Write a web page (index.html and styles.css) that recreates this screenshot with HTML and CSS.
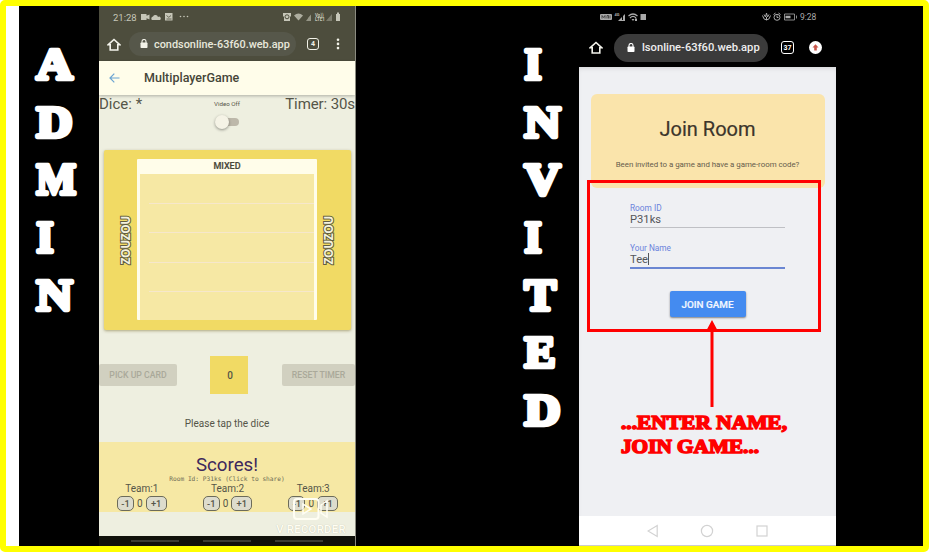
FILE: index.html
```html
<!DOCTYPE html>
<html lang="en">
<head>
<meta charset="utf-8">
<title>Multiplayer game: admin and invited</title>
<link rel="stylesheet" href="styles.css">
</head>
<body>
<main class="frame">
  <div class="stage">
    <svg class="side side-admin" width="80" height="540" viewBox="0 0 80 540">
      <text x="17.500" y="73" textLength="36" lengthAdjust="spacingAndGlyphs">A</text>
      <text x="17.500" y="130.700" textLength="36" lengthAdjust="spacingAndGlyphs">D</text>
      <text x="17.500" y="188.300" textLength="39.500" lengthAdjust="spacingAndGlyphs">M</text>
      <text x="17.500" y="246" textLength="17" lengthAdjust="spacingAndGlyphs">I</text>
      <text x="17.500" y="303.700" textLength="36" lengthAdjust="spacingAndGlyphs">N</text>
    </svg>

    <section class="phone admin">
      <div class="status">
        <span class="clock">21:28</span>
        <svg class="st-left" width="50" height="10" viewBox="0 0 50 10" fill="#c6c6b8"><path d="M0 2h5.500v1.700L8.500 2.500v5L5.500 6.300V8H0zM11 8a2 2 0 0 1 1-3.500 2.700 2.700 0 0 1 5 .5 1.600 1.600 0 0 1 2 3zM24 1h7.500v7.500H24z"/><path d="M25.500 3.500l2.300 1.800L30 3.500M25.500 7h5" fill="none" stroke="#4d4d3d" stroke-width=".8"/><circle cx="39.500" cy="4.500" r=".8"/><circle cx="43" cy="4.500" r=".8"/><circle cx="46.500" cy="4.500" r=".8"/></svg>
        <svg class="st-right" width="58" height="10" viewBox="0 0 58 10" fill="#c6c6b8"><path d="M0 1h8v3l-1 1v4H1V5L0 4z"/><circle cx="4" cy="4.800" r="2" fill="none" stroke="#4d4d3d"/><path d="M11 3.500q4.500-4 9 0L15.500 8.500z" opacity=".8"/><path d="M17 7.500h3M23 9h3V5zM25 9h3V2.500l-3 3.500z" opacity=".6"/><g class="tiny"><text x="32" y="4.500">Vo))</text><text x="32" y="9">LTE1</text></g><path d="M43 9h6V2z" opacity=".4"/><path d="M53 2h1V.5h2V2h1v7h-4z"/></svg>
      </div>
      <div class="toolbar">
        <svg class="home" width="14" height="13" viewBox="0 0 14 13"><path d="M1.300 6.700 7 1.500l5.700 5.200H10.800V12H3.200V6.700z"/></svg>
        <div class="address"><svg width="8" height="10" viewBox="0 0 8 10"><path d="M2 4V2.500a2 2 0 0 1 4 0V4" fill="none" stroke="#f2f2e8" stroke-width="1.100"/><rect x=".5" y="3.500" width="7" height="5.500" rx=".8" fill="#f2f2e8"/></svg><span>condsonline-63f60.web.app</span></div>
        <div class="tabs">4</div>
        <svg class="dots" width="4" height="12" viewBox="0 0 4 12" fill="#f2f2e8"><circle cx="2" cy="1.700" r="1.300"/><circle cx="2" cy="5.900" r="1.300"/><circle cx="2" cy="10.100" r="1.300"/></svg>
      </div>
      <header class="app-head">
        <svg width="11" height="10" viewBox="0 0 11 10" fill="none" stroke="#6ba4d2" stroke-width="1.200"><path d="M10.500 5H1M5.300.7 1 5l4.300 4.300"/></svg>
        <h1>MultiplayerGame</h1>
      </header>
      <div class="info">
        <span class="dice">Dice: *</span>
        <div class="video"><span>Video Off</span><i class="switch"></i></div>
        <span class="timer">Timer: 30s</span>
      </div>
      <div class="board">
        <div class="brand"><span>ZOUZOU</span></div>
        <div class="card"><h2>MIXED</h2><div class="slots"><i></i><i></i><i></i><i></i><i></i></div></div>
        <div class="brand"><span>ZOUZOU</span></div>
      </div>
      <div class="controls">
        <button class="pick">PICK UP CARD</button><div class="die">0</div><button class="reset">RESET TIMER</button>
      </div>
      <p class="hint">Please tap the dice</p>
      <div class="scores">
        <h2>Scores!</h2>
        <p class="room">Room Id: P31ks (Click to share)</p>
        <div class="teams">
          <div class="team"><b>Team:1</b><div><i>-1</i><span>0</span><i>+1</i></div></div>
          <div class="team"><b>Team:2</b><div><i>-1</i><span>0</span><i>+1</i></div></div>
          <div class="team"><b>Team:3</b><div><i>-1</i><span>0</span><i>+1</i></div></div>
        </div>
      </div>
      <div class="recorder">
        <svg width="36" height="22" viewBox="0 0 36 22" fill="none" stroke="#fffef3" stroke-width="2"><rect x="1" y="1" width="24.500" height="20" rx="3"/><path d="M10 6v10l8-5zM28 7l6-4v16l-6-4z" stroke-width="1.500"/></svg>
        <span>V RECORDER</span>
      </div>
      <div class="navline"><i></i><i></i><i></i></div>
    </section>

    <svg class="side side-invited" width="223" height="540" viewBox="0 0 223 540">
      <text x="168.500" y="73" textLength="17" lengthAdjust="spacingAndGlyphs">I</text>
      <text x="168.500" y="130.700" textLength="36" lengthAdjust="spacingAndGlyphs">N</text>
      <text x="168.500" y="188.300" textLength="36" lengthAdjust="spacingAndGlyphs">V</text>
      <text x="168.500" y="246" textLength="17" lengthAdjust="spacingAndGlyphs">I</text>
      <text x="168.500" y="303.700" textLength="31.500" lengthAdjust="spacingAndGlyphs">T</text>
      <text x="168.500" y="361.200" textLength="31" lengthAdjust="spacingAndGlyphs">E</text>
      <text x="168.500" y="418.900" textLength="36" lengthAdjust="spacingAndGlyphs">D</text>
    </svg>

    <section class="phone invited">
      <div class="status">
        <svg class="st-left" width="48" height="10" viewBox="0 0 48 10" fill="#aaa"><rect x="0" y="2" width="12" height="6" rx="1"/><path d="M2 6.500v-3l1.500 2 1.500-2v3M7 6.500v-3h1.500v3M10 3.500v3" stroke="#333" stroke-width=".8" fill="none"/><text x="14.500" y="4" class="mini">4G</text><path d="M18 9h7V2l-2 2v4h-1V5z"/><path d="M28.500 4q4.500-4 9 0M30 6q3-3 6 0" fill="none" stroke="#aaa" stroke-width="1.200"/><path d="M31.500 7h3L33 9zM35 6.500h2V9h-2zM40.500 2h5.500v6h-5.500z"/></svg>
        <svg class="st-right" width="37" height="10" viewBox="0 0 37 10" fill="none" stroke="#aaa"><path d="M.5 3.500q1 4.500 4 4.500t4-4.500M2 2.500 3.500 5 4.500 1 5.500 5 7 2.500M4.500 5v3"/><circle cx="15" cy="5.300" r="3"/><path d="M11.500 2.500l2-1.500M18.500 2.500l-2-1.500M15 3.500v2h1.500"/><path d="M22.500 2h10v6h-10zM34.500 3.500v3" stroke-width=".8"/><path d="M23.500 5h5" stroke-width="2.500"/></svg>
        <span class="clock">9:28</span>
      </div>
      <div class="toolbar">
        <svg class="home" width="14" height="13" viewBox="0 0 14 13"><path d="M1.300 6.700 7 1.500l5.700 5.200H10.800V12H3.200V6.700z"/></svg>
        <div class="address"><svg width="8" height="10" viewBox="0 0 8 10"><path d="M2 4V2.500a2 2 0 0 1 4 0V4" fill="none" stroke="#fff" stroke-width="1.100"/><rect x=".5" y="3.500" width="7" height="5.500" rx=".8" fill="#fff"/></svg><span>lsonline-63f60.web.app</span></div>
        <div class="tabs">37</div>
        <svg class="update" width="13" height="13" viewBox="0 0 13 13"><circle cx="6.500" cy="6.500" r="6.500" fill="#fff"/><path d="M6.500 3.200 3.500 6.500h1.700v3h2.600v-3h1.700z" fill="#c8564a"/></svg>
      </div>
      <div class="page">
        <div class="join-card"><h1>Join Room</h1><p>Been invited to a game and have a game-room code?</p></div>
        <div class="field"><label>Room ID</label><span>P31ks</span></div>
        <div class="field active"><label>Your Name</label><span>Tee<i class="caret"></i></span></div>
        <button class="join">JOIN GAME</button>
      </div>
      <div class="keys">
        <svg width="11" height="14" viewBox="0 0 11 14"><path d="M10.200 1.500v11L1 7z"/></svg>
        <svg width="14" height="14" viewBox="0 0 14 14"><circle cx="7" cy="7" r="5.600"/></svg>
        <svg width="12" height="14" viewBox="0 0 12 14"><rect x="1" y="2" width="10" height="10"/></svg>
      </div>
      <div class="highlight"></div>
      <svg class="arrow" width="10" height="87" viewBox="0 0 10 87"><path d="M3.500 8h3v79h-3zM5 0l4.800 9H.2z" fill="red"/></svg>
      <svg class="callout" width="180" height="52" viewBox="0 0 180 52">
        <text x="1" y="18.500" textLength="166" lengthAdjust="spacingAndGlyphs">...ENTER NAME,</text>
        <text x="1" y="42.500" textLength="138" lengthAdjust="spacingAndGlyphs">JOIN GAME...</text>
      </svg>
    </section>
  </div>
</main>
</body>
</html>
```
FILE: styles.css
```css
* { box-sizing: border-box; margin: 0; padding: 0; }
body { background: #fff; font-family: Roboto, sans-serif; overflow: hidden; }
i { font-style: normal; }
svg { display: block; flex: none; }
h1, h2, b { font-weight: 400; }
span { white-space: nowrap; }
.frame { width: 929px; height: 552px; border: 6px solid #ff0; border-radius: 5px; padding-left: 13px; background: #fff; overflow: hidden; }
.stage { height: 540px; background: #000; display: flex; }

.side { fill: #fff; stroke: #fff; stroke-width: 4.400px; stroke-linejoin: round; font: bold 45px "Liberation Serif", serif; }

.phone { position: relative; flex: none; height: 540px; display: flex; flex-direction: column; overflow: hidden; }
.admin { width: 257px; background: #eeefe0; color: #555548; border-right: 1px solid #8b8b80; }
.status { display: flex; align-items: center; flex: none; }
.toolbar { display: flex; align-items: center; flex: none; }
.address { display: flex; align-items: center; flex: none; font-weight: 500; }
.home { fill: none; stroke: #f4f4ec; stroke-width: 1.600; }
.tabs { display: grid; place-items: center; flex: none; width: 12px; height: 12px; border: 1.500px solid #f2f2e8; border-radius: 3px; color: #f2f2e8; font-size: 7px; font-weight: 700; line-height: 8px; }

.admin .status { height: 22px; background: #4d4d3d; padding-left: 14px; }
.admin .clock { width: 28px; font-size: 9.500px; color: #c6c6b8; }
.admin .st-right { margin: 0 0 0 92px; }
.tiny { font: 700 4.500px Roboto, sans-serif; }
.mini { font: 700 4px Roboto, sans-serif; }
.admin .toolbar { height: 32.500px; background: #4d4d3d; padding-left: 8px; }
.admin .address { width: 167px; height: 24px; margin-left: 8px; padding-left: 11px; gap: 6px; border-radius: 12px; background: #56574a; color: #e8e8dc; font-size: 10.900px; }
.admin .tabs { margin-left: 11px; }
.admin .dots { margin-left: 17px; }
.app-head { flex: none; height: 34.500px; background: #fffdea; display: flex; align-items: center; padding-left: 10px; box-shadow: 0 1px 3px #0004; z-index: 1; }
.app-head h1 { margin-left: 24px; font-size: 12.500px; font-weight: 500; color: #454538; }
.info { flex: none; height: 55px; display: flex; justify-content: space-between; font-size: 15px; line-height: 18px; }
.dice, .timer { width: 100px; }
.timer { text-align: right; letter-spacing: -.1px; }
.video { display: flex; flex-direction: column; align-items: center; font-size: 6.200px; line-height: 19px; }
.switch { position: relative; width: 22px; height: 8px; margin: 4px 0 0 2px; border-radius: 4px; background: #bdb8aa; }
.switch::before { content: ""; position: absolute; left: -2px; top: -3px; width: 14px; height: 14px; border-radius: 50%; background: #f5f3e6; box-shadow: 0 1px 3px #0006; }
.board { flex: none; width: 247px; height: 180px; margin: 0 0 0 5px; border-radius: 2px; background: #f1da64; box-shadow: 0 1px 3px #6b602080; display: flex; }
.brand { flex: none; width: 33px; display: flex; align-items: center; justify-content: center; }
.brand span { writing-mode: vertical-rl; transform: rotate(180deg); font: 700 12px/14px "Noto Sans", sans-serif; color: #f5f2df; -webkit-text-stroke: 2px #605d41; paint-order: stroke fill; letter-spacing: -.4px; }
.brand:first-child { padding-left: 10px; }
.brand:last-child { padding-right: 9px; }
.card { width: 180px; height: 161px; margin-top: 9px; flex: none; background: #fffdea; padding: 0 3px; border-radius: 1px; }
.card h2 { height: 15px; text-align: center; font-size: 9px; font-weight: 500; line-height: 15px; color: #484839; -webkit-text-stroke: .2px #484839; }
.slots { height: 146px; background: #f6e8a4; display: grid; grid-template-rows: repeat(5, 1fr); padding-left: 9px; }
.slots i + i { border-top: 1px solid #f6e7cb; }
.controls { flex: none; height: 38px; margin-top: 26px; display: flex; align-items: center; }
.controls button { flex: none; border: 0; height: 22px; background: #d1d0c0; color: #aaa99a; font: 500 8.700px Roboto, sans-serif; border-radius: 2px; white-space: nowrap; }
.controls .pick { width: 78px; margin-right: 33px; }
.controls .reset { width: 73px; margin-left: 34px; }
.die { flex: none; width: 38px; height: 38px; background: #f1da64; display: grid; place-items: center; font-size: 10px; font-weight: 500; padding-left: 2px; }
.hint { flex: none; margin-top: 20px; height: 28px; line-height: 19px; text-align: center; font-size: 10px; }
.scores { flex: none; height: 70px; background: #f6e8a4; padding-top: 13px; }
.scores h2 { text-align: center; color: #3d285c; font-size: 18.700px; line-height: 20px; }
.room { height: 7px; text-align: center; white-space: nowrap; font: 6.200px/7px "DejaVu Sans Mono", monospace; opacity: .85; }
.teams { display: grid; grid-template-columns: repeat(3, 85.700px); }
.team { text-align: center; }
.team b { display: block; font-size: 10px; line-height: 13px; }
.team div { display: flex; justify-content: center; align-items: center; gap: 3px; margin-top: 1px; font-size: 10px; line-height: 13px; }
.team i { width: 17px; height: 15px; border: 1px solid #6c6b59; border-radius: 5px; background: #dddccd; font-size: 9.300px; font-weight: 500; }
.team i:last-child { width: 21px; }
.recorder { position: absolute; left: 176px; top: 492px; width: 72px; display: flex; flex-direction: column; align-items: center; color: #fffef3; }
.recorder svg { margin-right: 1px; }
.recorder span { margin-top: 3px; font-size: 11.300px; font-weight: 500; line-height: 13px; letter-spacing: .3px; text-shadow: 0 0 1px #bbb9a8; }
.navline { margin-top: auto; flex: none; height: 10px; background: #11110a; display: flex; justify-content: center; align-items: center; gap: 24px; }
.navline i { width: 48px; height: 2px; background: #3c3c33; }

.invited { width: 257px; background: #eff0f3; }
.invited .status { height: 22px; background: #000; padding-left: 21px; }
.invited .st-right { margin-left: 114px; }
.invited .clock { margin-left: 1px; font-size: 8.500px; color: #aaa; }
.invited .toolbar { height: 39px; background: #000; padding: 0 0 0 10px; }
.invited .address { width: 154px; height: 28px; border-radius: 14px; margin-left: 11px; padding-left: 13px; gap: 7px; background: #3b3b3b; color: #eee; font-size: 11.200px; }
.invited .tabs { margin-left: 13px; border-color: #fff; color: #fff; width: 13px; height: 13px; }
.update { margin-left: 15px; }
.page { flex: none; height: 449px; padding: 27px 12px 0 12px; display: flex; flex-direction: column; align-items: center; box-shadow: inset 0 3px 5px -2px #0002; }
.join-card { flex: none; width: 234px; height: 94px; border-radius: 6px; background: #fae4ab; text-align: center; }
.join-card h1 { padding-top: 24px; font-size: 20px; line-height: 22px; color: #3c352b; -webkit-text-stroke: .2px #3c352b; }
.join-card p { margin-top: 20px; font-size: 7.900px; line-height: 9px; color: #665d4b; white-space: nowrap; letter-spacing: -.03px; }
.field { flex: none; width: 155px; height: 25px; margin-top: 15px; border-bottom: 1px solid #bfc0c4; color: #55565a; font-size: 11.200px; line-height: 13px; display: flex; flex-direction: column; }
.field label { font-size: 8.300px; line-height: 10px; color: #6b83dc; }
.field.active { border-bottom: 2px solid #6a86d2; height: 26px; }
.field.active span { line-height: 12px; }
.caret { display: inline-block; width: 1px; height: 12px; background: #55565a; vertical-align: -2px; }
.join { flex: none; width: 76px; height: 26px; margin-top: 22px; border: 0; border-radius: 2px; background: #448bf0; color: #f2f7ff; font: 500 9.900px Roboto, sans-serif; -webkit-text-stroke: .2px #f2f7ff; box-shadow: 0 1px 2px #0007; white-space: nowrap; }
.keys { flex: none; height: 30px; background: #fff; border-bottom: 1px solid #ccc; padding: 0 68px; display: flex; align-items: center; justify-content: space-between; }
.keys svg { fill: none; stroke: #d2d2d2; stroke-width: 1.200px; }
.highlight { position: absolute; left: 8px; top: 174px; width: 234px; height: 152px; border: 3px solid red; }
.arrow { position: absolute; left: 128px; top: 314px; }
.callout { position: absolute; left: 41px; top: 404px; fill: red; stroke: red; stroke-width: 1.600px; stroke-linejoin: round; font: bold 19.500px "Liberation Serif", serif; }
```
